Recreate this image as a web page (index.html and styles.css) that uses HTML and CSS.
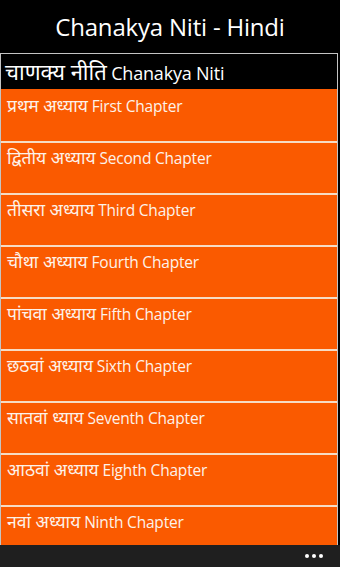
FILE: index.html
```html
<!DOCTYPE html>
<html>
<head>
<meta charset="utf-8">
<link rel="stylesheet" href="styles.css">
</head>
<body>
<div class="page">
  <div class="title">Chanakya Niti - Hindi</div>
  <div class="main">
    <div class="panel">
      <div class="panel-head"><span class="hi hi-lg">चाणक्य नीति</span> Chanakya Niti</div>
      <ul class="list">
        <li class="item"><span class="hi">प्रथम अध्याय</span> First Chapter</li>
        <li class="item"><span class="hi">द्वितीय अध्याय</span> Second Chapter</li>
        <li class="item"><span class="hi">तीसरा अध्याय</span> Third Chapter</li>
        <li class="item"><span class="hi">चौथा अध्याय</span> Fourth Chapter</li>
        <li class="item"><span class="hi">पांचवा अध्याय</span> Fifth Chapter</li>
        <li class="item"><span class="hi">छठवां अध्याय</span> Sixth Chapter</li>
        <li class="item"><span class="hi">सातवां ध्याय</span> Seventh Chapter</li>
        <li class="item"><span class="hi">आठवां अध्याय</span> Eighth Chapter</li>
        <li class="item"><span class="hi">नवां अध्याय</span> Ninth Chapter</li>
      </ul>
    </div>
  </div>
  <div class="appbar">
    <span class="dots"><i></i><i></i><i></i></span>
  </div>
</div>
</body>
</html>
```

FILE: styles.css
```css
html, body {
  margin: 0;
  padding: 0;
  background: #000;
}
.page {
  width: 340px;
  height: 567px;
  display: flex;
  flex-direction: column;
  overflow: hidden;
  font-family: "Open Sans", "Noto Sans", "Noto Sans Devanagari", sans-serif;
  color: #fff;
}
.title {
  height: 53px;
  flex: none;
  display: flex;
  align-items: center;
  justify-content: center;
  font-size: 24px;
  letter-spacing: -0.2px;
}
.main {
  flex: 1;
  overflow: hidden;
}
.panel {
  width: 336px;
  border: 1px solid #c4c4c4;
  border-bottom: none;
  box-sizing: content-box;
}
.panel-head {
  height: 35px;
  background: #000;
  font-size: 18px;
  line-height: 35px;
  padding-left: 4px;
  letter-spacing: -0.2px;
  white-space: nowrap;
}
.hi {
  font-size: 1.13em;
  letter-spacing: 0;
}
.hi-lg {
  font-size: 1.22em;
}
.list {
  list-style: none;
  margin: 0;
  padding: 0;
}
.item {
  height: 48px;
  padding: 2px 0 0 6px;
  background: #fa5a00;
  border-top: 2px solid #f6dcc4;
  font-size: 15.5px;
  line-height: 24px;
  letter-spacing: -0.2px;
  color: #fdf2ea;
  white-space: nowrap;
}
.item:first-child {
  border-top-color: #fa5a00;
}
.appbar {
  height: 22px;
  flex: none;
  background: #1f1f1f;
  display: flex;
  align-items: center;
  justify-content: flex-end;
  padding-right: 17px;
}
.dots {
  display: flex;
  gap: 3px;
}
.dots i {
  width: 4px;
  height: 4px;
  border-radius: 50%;
  background: #fff;
}
```
